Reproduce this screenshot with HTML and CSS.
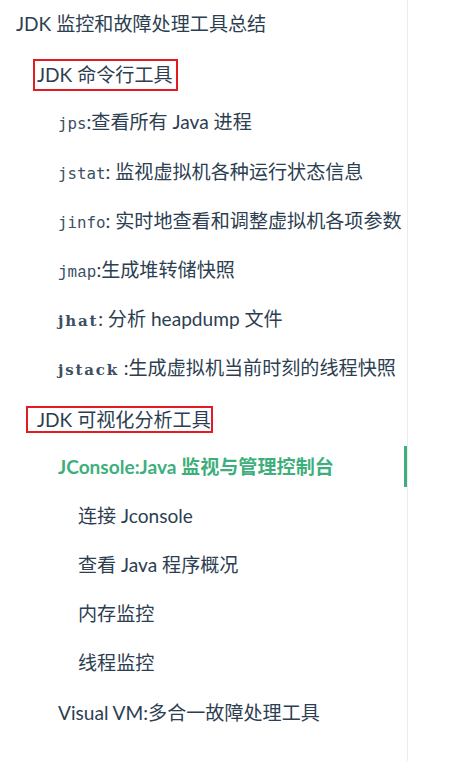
FILE: index.html
```html
<!DOCTYPE html>
<html lang="zh-CN">
<head>
<meta charset="utf-8">
<title>JDK 监控和故障处理工具总结</title>
<link rel="stylesheet" href="styles.css">
</head>
<body>
<nav class="sidebar">
  <ul class="toc">
    <li class="item l1">JDK 监控和故障处理工具总结</li>
    <li class="item l2"><span class="mark mark-a">JDK 命令行工具</span></li>
    <li class="item l3"><code class="m-sans">jps</code>:查看所有 Java 进程</li>
    <li class="item l3"><code class="m-sans">jstat</code>: 监视虚拟机各种运行状态信息</li>
    <li class="item l3"><code class="m-sans">jinfo</code>: 实时地查看和调整虚拟机各项参数</li>
    <li class="item l3"><code class="m-thin">jmap</code>:生成堆转储快照</li>
    <li class="item l3"><code class="m-bold">jhat</code>: 分析 heapdump 文件</li>
    <li class="item l3"><code class="m-bold">jstack</code> :生成虚拟机当前时刻的线程快照</li>
    <li class="item l2"><span class="mark mark-b">JDK 可视化分析工具</span></li>
    <li class="item l3 active">JConsole:Java 监视与管理控制台</li>
    <li class="item l4">连接 Jconsole</li>
    <li class="item l4">查看 Java 程序概况</li>
    <li class="item l4">内存监控</li>
    <li class="item l4">线程监控</li>
    <li class="item l3">Visual VM:多合一故障处理工具</li>
  </ul>
</nav>
</body>
</html>
```
FILE: styles.css
```css
html, body {
  margin: 0;
  padding: 0;
  background: #fff;
}

body {
  font-family: "Lato", "Noto Sans CJK SC", sans-serif;
  font-size: 19.1px;
  color: #2c3e50;
}

.sidebar {
  width: 407px;
  height: 761px;
  border-right: 1px solid #eaecef;
  box-sizing: content-box;
}

.toc {
  list-style: none;
  margin: 0;
  padding: 3px 0 0 0;
  display: flex;
  flex-direction: column;
  gap: 8.2px;
}

.item {
  height: 41px;
  line-height: 41px;
  white-space: nowrap;
}

.l1 { padding-left: 16px; }
.l2 { padding-left: 37px; }
.l3 { padding-left: 58px; }
.l4 { padding-left: 78px; }

.active {
  color: #3eaf7c;
  font-weight: 700;
  border-right: 3px solid #3eaf7c;
}

.mark {
  display: inline-block;
  border: 2px solid #e31b23;
  vertical-align: middle;
}

.mark-a {
  line-height: 28px;
  padding: 0 3px 0 2px;
  margin-left: -4px;
}

.mark-b {
  line-height: 23px;
  padding: 0 0 0 9px;
  margin-left: -11px;
}

code {
  color: #3d4f63;
}

.m-sans {
  font-family: "DejaVu Sans Mono", monospace;
  font-size: 15.8px;
}

.m-thin {
  font-family: "Liberation Mono", monospace;
  font-size: 16px;
}

.m-bold {
  font-family: "DejaVu Serif", serif;
  font-weight: 700;
  font-size: 15px;
  letter-spacing: 1.8px;
}
```
